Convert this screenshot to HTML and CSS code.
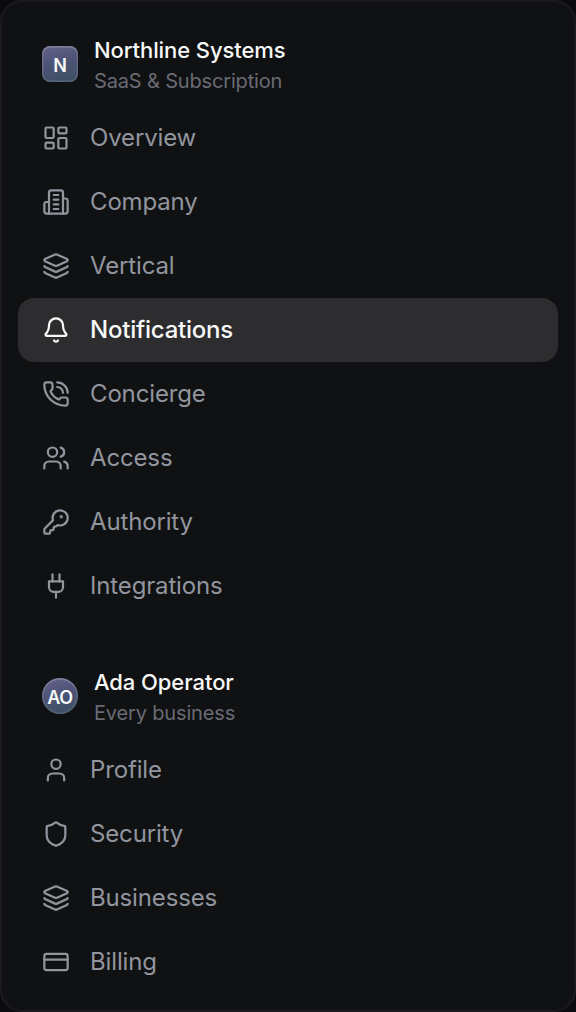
FILE: index.html
```
<!DOCTYPE html>
<html lang="en">
<head>
<meta charset="utf-8">
<title>Settings navigation</title>
<link rel="stylesheet" href="styles.css">
</head>
<body>
<svg class="sprite" aria-hidden="true">
  <symbol id="layers" viewBox="0 0 24 24"><path d="M12.83 2.18a2 2 0 0 0-1.66 0L2.6 6.08a1 1 0 0 0 0 1.83l8.58 3.91a2 2 0 0 0 1.66 0l8.58-3.9a1 1 0 0 0 0-1.83z"/><path d="M2 12a1 1 0 0 0 .58.91l8.6 3.91a2 2 0 0 0 1.65 0l8.58-3.9A1 1 0 0 0 22 12"/><path d="M2 17a1 1 0 0 0 .58.91l8.6 3.91a2 2 0 0 0 1.65 0l8.58-3.9A1 1 0 0 0 22 17"/></symbol>
</svg>
<aside class="panel">
  <section class="group">
    <header class="owner">
      <span class="avatar">N</span>
      <div class="owner-text"><div class="name">Northline Systems</div><div class="detail">SaaS &amp; Subscription</div></div>
    </header>
    <nav>
      <a class="item"><svg class="icon" viewBox="0 0 24 24"><rect width="7" height="9" x="3" y="3" rx="1"/><rect width="7" height="5" x="14" y="3" rx="1"/><rect width="7" height="9" x="14" y="12" rx="1"/><rect width="7" height="5" x="3" y="16" rx="1"/></svg><span class="label">Overview</span></a>
      <a class="item"><svg class="icon" viewBox="0 0 24 24"><path d="M6 22V4a2 2 0 0 1 2-2h8a2 2 0 0 1 2 2v18Z"/><path d="M6 12H4a2 2 0 0 0-2 2v6a2 2 0 0 0 2 2h2"/><path d="M18 9h2a2 2 0 0 1 2 2v9a2 2 0 0 1-2 2h-2"/><path d="M10 6h4M10 10h4M10 14h4M10 18h4"/></svg><span class="label">Company</span></a>
      <a class="item"><svg class="icon"><use href="#layers"/></svg><span class="label">Vertical</span></a>
      <a class="item active"><svg class="icon" viewBox="0 0 24 24"><path d="M10.268 21a2 2 0 0 0 3.464 0"/><path d="M3.262 15.326A1 1 0 0 0 4 17h16a1 1 0 0 0 .74-1.673C19.41 13.956 18 12.499 18 8A6 6 0 0 0 6 8c0 4.499-1.411 5.956-2.738 7.326"/></svg><span class="label">Notifications</span></a>
      <a class="item"><svg class="icon" viewBox="0 0 24 24"><path d="M13 2a9 9 0 0 1 9 9"/><path d="M13 6a5 5 0 0 1 5 5"/><path d="M13.832 16.568a1 1 0 0 0 1.213-.303l.355-.465A2 2 0 0 1 17 15h3a2 2 0 0 1 2 2v3a2 2 0 0 1-2 2A18 18 0 0 1 2 4a2 2 0 0 1 2-2h3a2 2 0 0 1 2 2v3a2 2 0 0 1-.8 1.6l-.468.351a1 1 0 0 0-.292 1.233 14 14 0 0 0 6.392 6.384"/></svg><span class="label">Concierge</span></a>
      <a class="item"><svg class="icon" viewBox="0 0 24 24"><path d="M16 21v-2a4 4 0 0 0-4-4H6a4 4 0 0 0-4 4v2"/><path d="M16 3.128a4 4 0 0 1 0 7.744"/><path d="M22 21v-2a4 4 0 0 0-3-3.87"/><circle cx="9" cy="7" r="4"/></svg><span class="label">Access</span></a>
      <a class="item"><svg class="icon" viewBox="0 0 24 24"><path d="M2.586 17.414A2 2 0 0 0 2 18.828V21a1 1 0 0 0 1 1h3a1 1 0 0 0 1-1v-1a1 1 0 0 1 1-1h1a1 1 0 0 0 1-1v-1a1 1 0 0 1 1-1h.172a2 2 0 0 0 1.414-.586l.814-.814a6.5 6.5 0 1 0-4-4z"/><circle cx="16.5" cy="7.5" r=".5" fill="currentColor"/></svg><span class="label">Authority</span></a>
      <a class="item"><svg class="icon" viewBox="0 0 24 24"><path d="M12 22v-5"/><path d="M9 8V2"/><path d="M15 8V2"/><path d="M18 8v5a4 4 0 0 1-4 4h-4a4 4 0 0 1-4-4V8Z"/></svg><span class="label">Integrations</span></a>
    </nav>
  </section>
  <section class="group">
    <header class="owner">
      <span class="avatar round">AO</span>
      <div class="owner-text"><div class="name">Ada Operator</div><div class="detail">Every business</div></div>
    </header>
    <nav>
      <a class="item"><svg class="icon" viewBox="0 0 24 24"><path d="M19 21v-2a4 4 0 0 0-4-4H9a4 4 0 0 0-4 4v2"/><circle cx="12" cy="7" r="4"/></svg><span class="label">Profile</span></a>
      <a class="item"><svg class="icon" viewBox="0 0 24 24"><path d="M20 13c0 5-3.5 7.5-7.66 8.95a1 1 0 0 1-.67-.01C7.5 20.5 4 18 4 13V6a1 1 0 0 1 1-1c2 0 4.5-1.2 6.24-2.72a1.17 1.17 0 0 1 1.52 0C14.51 3.81 17 5 19 5a1 1 0 0 1 1 1z"/></svg><span class="label">Security</span></a>
      <a class="item"><svg class="icon"><use href="#layers"/></svg><span class="label">Businesses</span></a>
      <a class="item"><svg class="icon" viewBox="0 0 24 24"><rect width="20" height="14" x="2" y="5" rx="2"/><path d="M2 10h20"/></svg><span class="label">Billing</span></a>
    </nav>
  </section>
</aside>
</body>
</html>
```
FILE: styles.css
```
* { box-sizing: border-box; }
body {
  margin: 0;
  background: #0b0a0d;
  font-family: Inter, "Liberation Sans", sans-serif;
}
.sprite { display: none; }
.panel {
  display: flex;
  flex-direction: column;
  gap: 20px;
  height: 1012px;
  padding: 20px 16px 12px;
  border: 2px solid #1b1b1e;
  border-radius: 22px;
  background: #101113;
}
.owner {
  display: flex;
  gap: 16px;
  height: 84px;
  padding: 12px 24px 0;
}
.group + .group .owner { height: 100px; padding-top: 28px; }
.avatar {
  display: flex;
  align-items: center;
  justify-content: center;
  flex: none;
  width: 36px;
  height: 36px;
  margin-top: 12px;
  padding-top: 3px;
  border-radius: 8px;
  background: linear-gradient(165deg, #67628b 0%, #4d5376 45%, #3a5060 100%);
  box-shadow: inset 0 0 0 1.5px rgba(255, 255, 255, .12), inset 0 2px 1px rgba(255, 255, 255, .1);
  color: #f7f8f8;
  font-size: 18px;
  font-weight: 600;
}
.avatar.round { border-radius: 50%; letter-spacing: -.4px; }
.name {
  color: #f7f8f8;
  font-size: 22px;
  font-weight: 500;
  line-height: 32px;
  letter-spacing: -.08px;
}
.detail {
  color: #696b73;
  font-size: 20px;
  line-height: 30px;
  letter-spacing: -.16px;
}
.item {
  display: flex;
  align-items: center;
  gap: 20px;
  height: 64px;
  padding: 0 24px;
  border-radius: 16px;
  color: #92959e;
  font-size: 24px;
  letter-spacing: -.15px;
}
.label { padding-bottom: 2px; }
.item.active {
  background: #2d2d2f;
  color: #f7f8f8;
  font-weight: 500;
  letter-spacing: -.22px;
}
.icon {
  flex: none;
  width: 28px;
  height: 28px;
  fill: none;
  stroke: currentColor;
  stroke-width: 1.9;
  stroke-linecap: round;
  stroke-linejoin: round;
}
```
